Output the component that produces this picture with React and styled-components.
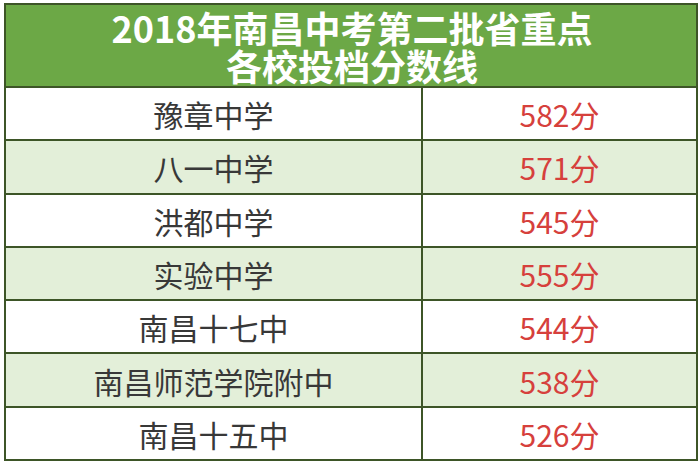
import React from 'react';
import styled, { createGlobalStyle } from 'styled-components';

const GlobalStyle = createGlobalStyle`
  html, body {
    margin: 0;
    padding: 0;
    background: #ffffff;
  }
  body {
    font-family: "Noto Sans CJK SC", "Noto Sans", sans-serif;
  }
`;

const LINE = '#3d5527';

const Table = styled.div`
  box-sizing: border-box;
  width: 694px;
  margin: 3px 0 0 4px;
  border: 2px solid ${LINE};
`;

const Header = styled.div`
  height: 81px;
  background: #6ca846;
  border-bottom: 2px solid ${LINE};
  display: flex;
  flex-direction: column;
  align-items: center;
  justify-content: center;
  color: #ffffff;
  font-size: 36px;
  font-weight: 700;
  padding-left: 2px;
`;

const TitleLine = styled.div`
  height: 38px;
  line-height: 38px;
  overflow: visible;
  white-space: nowrap;
`;

const Row = styled.div`
  display: grid;
  grid-template-columns: 415px 1fr;
  height: 51.3px;
  background: ${(p) => (p.$shaded ? '#e3efd9' : '#ffffff')};
  border-top: ${(p) => (p.$first ? 'none' : `2px solid ${LINE}`)};
`;

const Cell = styled.div`
  display: flex;
  align-items: center;
  justify-content: center;
  font-size: 30px;
  line-height: 1;
  color: ${(p) => (p.$score ? '#d6403c' : '#383838')};
  border-left: ${(p) => (p.$score ? `2px solid ${LINE}` : 'none')};
  padding-top: 1px;
`;

const schools = [
  ['豫章中学', 582],
  ['八一中学', 571],
  ['洪都中学', 545],
  ['实验中学', 555],
  ['南昌十七中', 544],
  ['南昌师范学院附中', 538],
  ['南昌十五中', 526],
];

export default function App() {
  return (
    <>
      <GlobalStyle />
      <Table>
        <Header>
          <TitleLine>2018年南昌中考第二批省重点</TitleLine>
          <TitleLine>各校投档分数线</TitleLine>
        </Header>
        {schools.map(([name, score], i) => (
          <Row key={name} $shaded={i % 2 === 1} $first={i === 0}>
            <Cell>{name}</Cell>
            <Cell $score>{score}分</Cell>
          </Row>
        ))}
      </Table>
    </>
  );
}
